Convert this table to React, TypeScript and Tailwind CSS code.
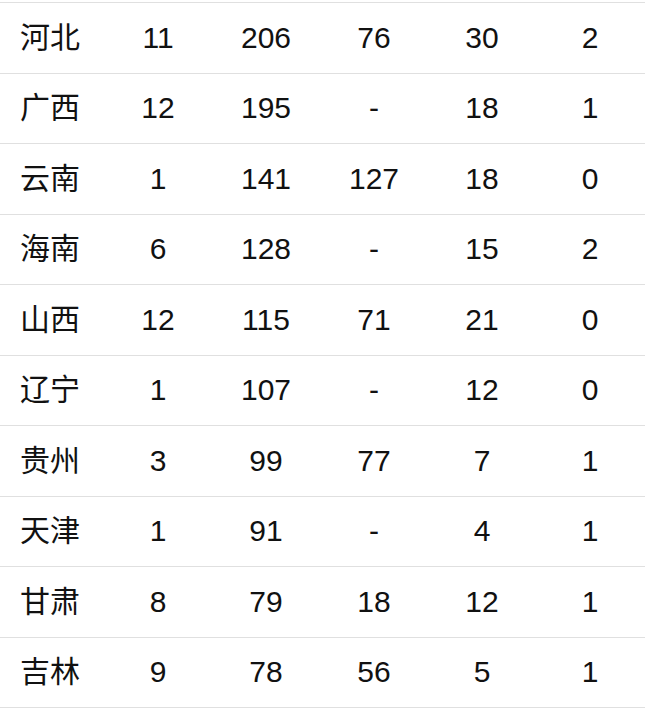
const rows: [string, string, string, string, string, string][] = [
  ['河北', '11', '206', '76', '30', '2'],
  ['广西', '12', '195', '-', '18', '1'],
  ['云南', '1', '141', '127', '18', '0'],
  ['海南', '6', '128', '-', '15', '2'],
  ['山西', '12', '115', '71', '21', '0'],
  ['辽宁', '1', '107', '-', '12', '0'],
  ['贵州', '3', '99', '77', '7', '1'],
  ['天津', '1', '91', '-', '4', '1'],
  ['甘肃', '8', '79', '18', '12', '1'],
  ['吉林', '9', '78', '56', '5', '1'],
]

export default function App() {
  return (
    <div
      className="w-[663px] h-[710px] bg-white pt-[2px] text-[#111]"
      style={{ fontFamily: '"Liberation Sans", "Noto Sans CJK SC", sans-serif' }}
    >
      <div className="w-[645px] border-b border-[#e0e0e0]">
        {rows.map((r) => (
          <div key={r[0]} className="grid grid-cols-[104px_repeat(5,108px)] h-[70.5px] border-t border-[#e0e0e0] items-center text-[30px] leading-none">
            <div className="pl-[20px]">{r[0]}</div>
            {r.slice(1).map((v, i) => (
              <div key={i} className="text-center">{v}</div>
            ))}
          </div>
        ))}
      </div>
    </div>
  )
}
